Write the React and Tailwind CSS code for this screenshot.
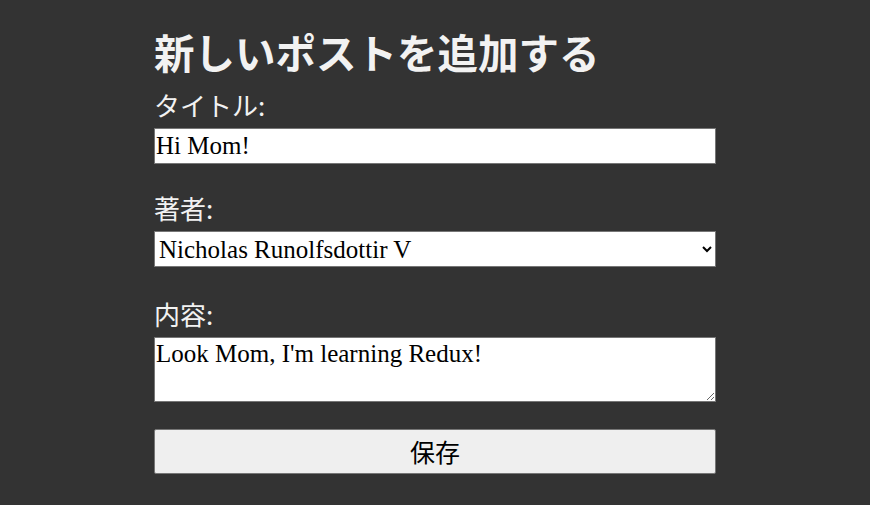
import { useState } from 'react';

const authors = ['Nicholas Runolfsdottir V', 'Leanne Graham', 'Ervin Howell', 'Clementine Bauch'];

const App = () => {
  const [title, setTitle] = useState('Hi Mom!');
  const [author, setAuthor] = useState(authors[0]);
  const [content, setContent] = useState("Look Mom, I'm learning Redux!");

  return (
    <div className="min-h-screen bg-[#333333] font-['Noto_Sans_CJK_JP','Noto_Sans',sans-serif] text-[#f2f2f2]">
      <section className="mx-auto w-[562px] pt-[28px] pb-8">
        {/* Heading */}
        <h2 className="text-[40.5px] font-bold leading-[48px]">新しいポストを追加する</h2>

        <form className="mt-[11px] flex flex-col" onSubmit={(e) => e.preventDefault()}>
          <label htmlFor="postTitle" className="text-[26px] leading-[36px]">
            タイトル:
          </label>
          <input
            id="postTitle"
            type="text"
            value={title}
            onChange={(e) => setTitle(e.target.value)}
            className="mt-[5px] h-[36px] border border-[#767676] bg-white px-px font-['Liberation_Serif',serif] text-[25px] text-black outline-none"
          />

          <label htmlFor="postAuthor" className="mt-[26px] text-[26px] leading-[36px]">
            著者:
          </label>
          <select
            id="postAuthor"
            value={author}
            onChange={(e) => setAuthor(e.target.value)}
            className="mt-[5px] h-[36px] border border-[#767676] bg-white px-0 font-['Liberation_Serif',serif] text-[25px] text-black outline-none"
          >
            {authors.map((a) => (
              <option key={a} value={a}>
                {a}
              </option>
            ))}
          </select>

          <label htmlFor="postContent" className="mt-[29px] text-[26px] leading-[36px]">
            内容:
          </label>
          <textarea
            id="postContent"
            value={content}
            onChange={(e) => setContent(e.target.value)}
            className="mt-[5px] h-[65px] border border-[#767676] bg-white px-px font-['Liberation_Serif',serif] text-[25px] leading-[31px] text-black outline-none"
          />

          <button
            type="submit"
            className="mt-[27px] h-[45px] rounded-[2px] border border-[#767676] bg-[#efefef] text-[25px] text-black"
          >
            保存
          </button>
        </form>
      </section>
    </div>
  );
};

export default App;
